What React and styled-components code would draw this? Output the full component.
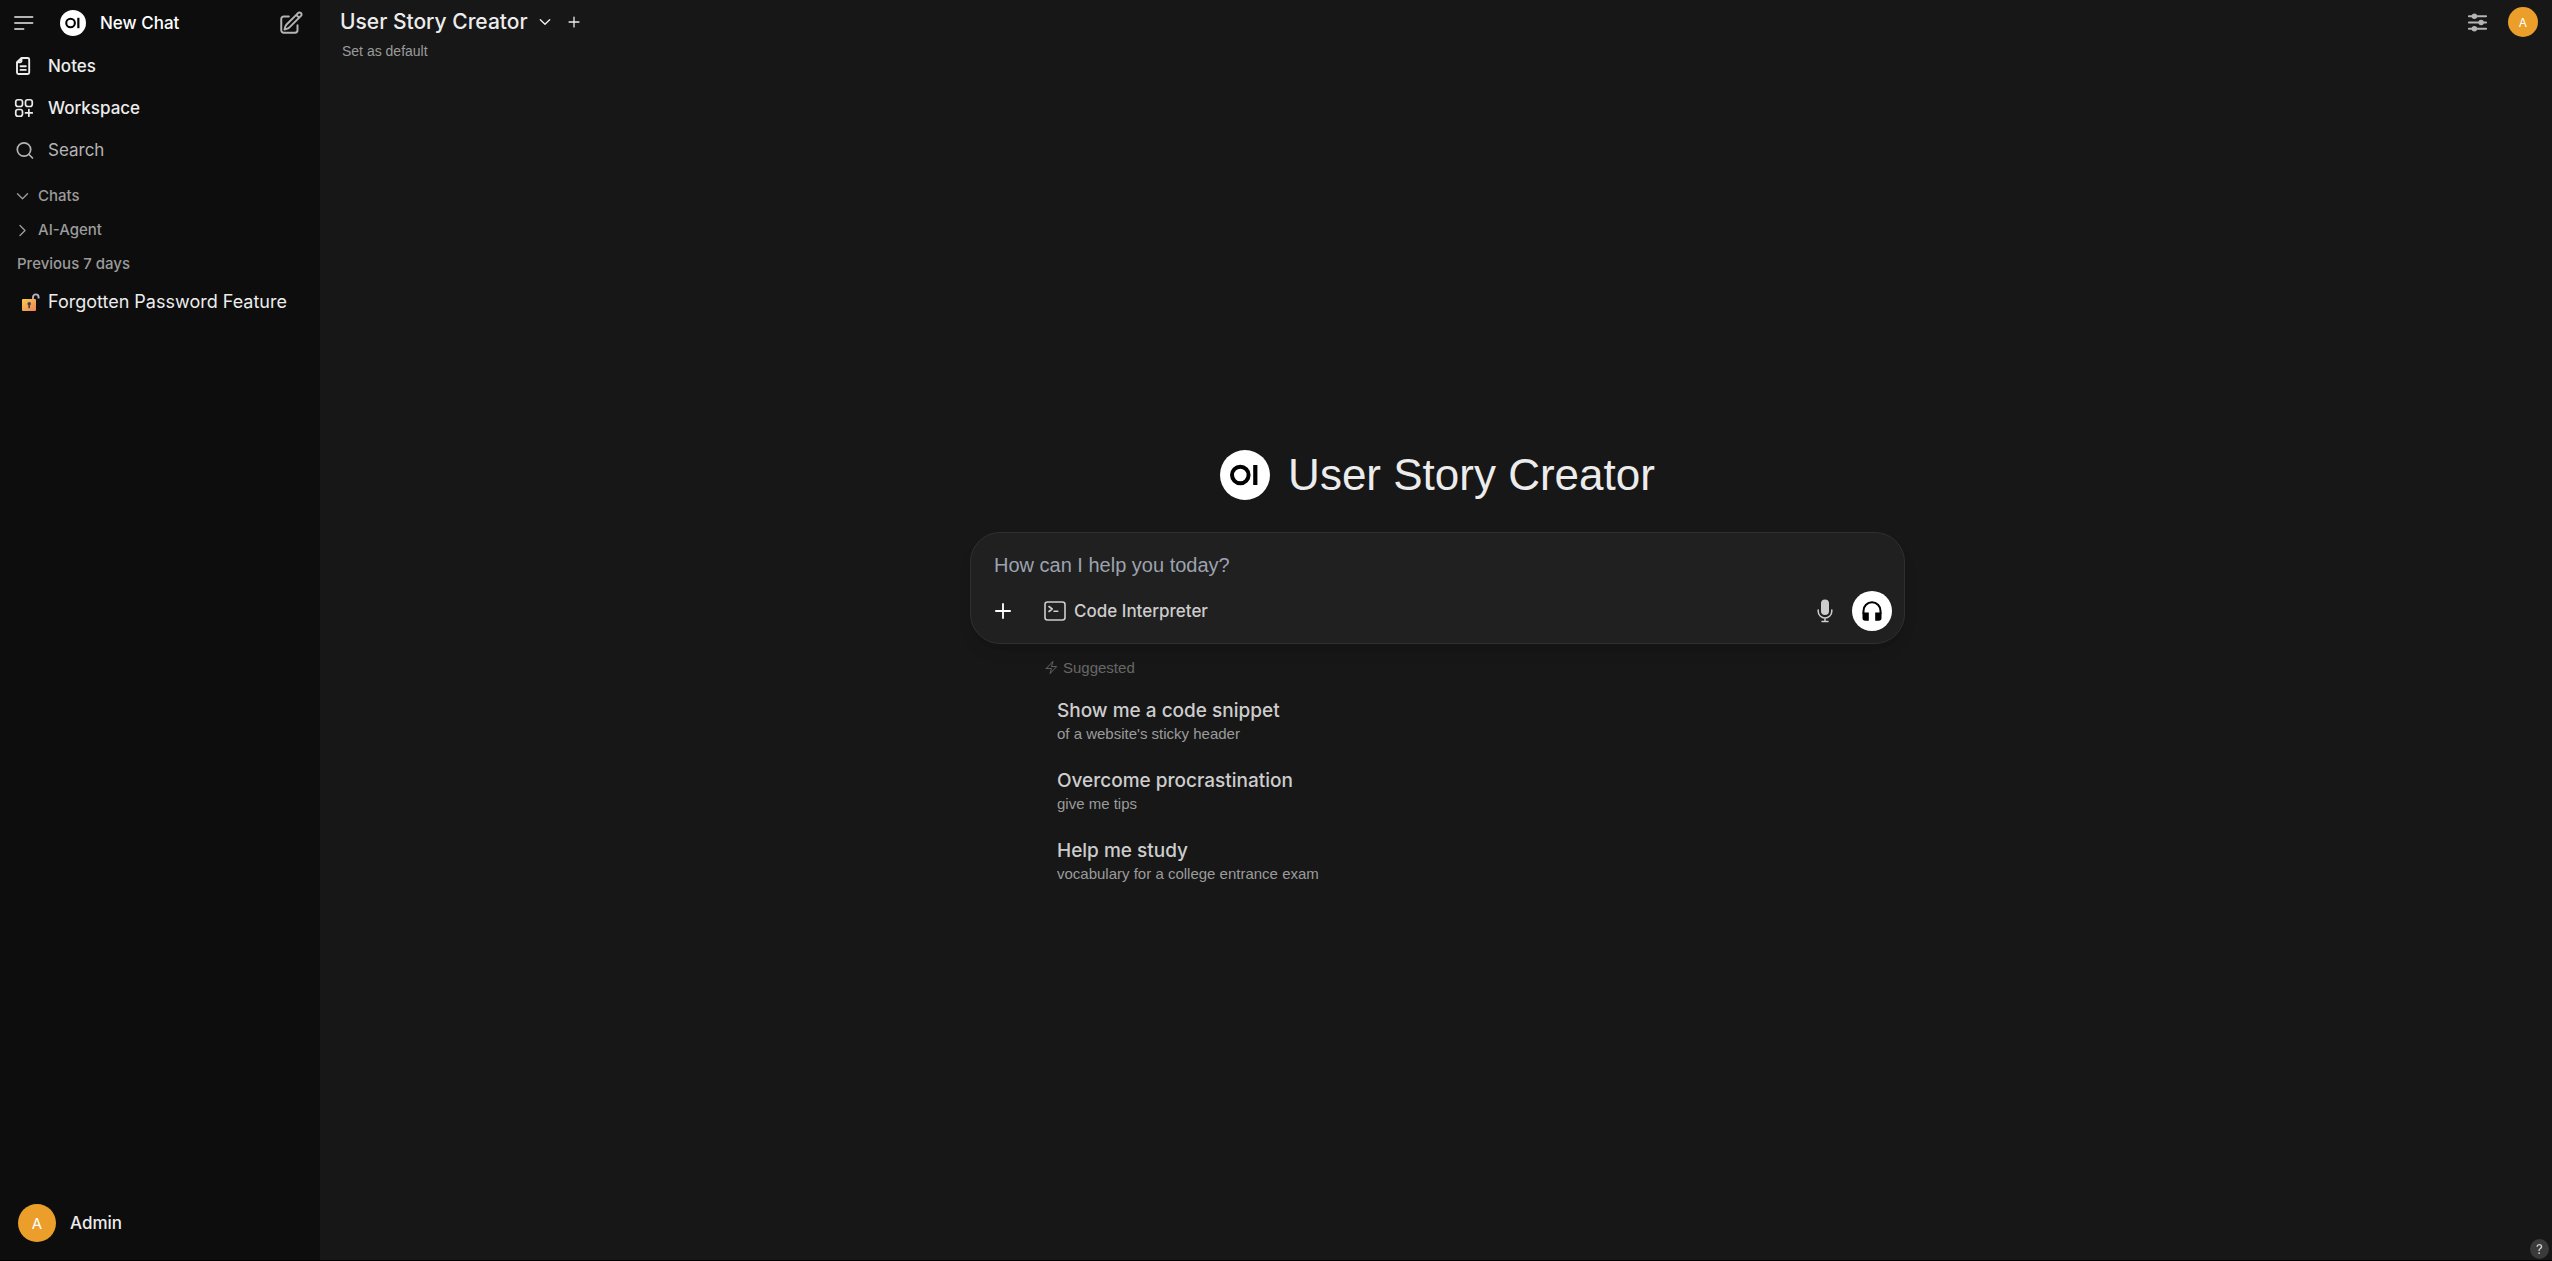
import React from "react";
import styled, { createGlobalStyle } from "styled-components";

const display = `"Liberation Sans", Arial, sans-serif`;
const ui = `Inter, "Liberation Sans", sans-serif`;

const GlobalStyle = createGlobalStyle`
  *, *::before, *::after { box-sizing: border-box; }
  body { margin: 0; background: #171717; color: #ececec; font-family: ${ui}; }
  button, textarea { font: inherit; color: inherit; background: none; border: 0; padding: 0; margin: 0; }
  button { cursor: pointer; text-align: left; }
  a { color: inherit; text-decoration: none; }
  h1, h2, p, ul { margin: 0; padding: 0; font-weight: inherit; }
  ul { list-style: none; }
`;

const Shell = styled.div`
  display: flex;
  height: 100vh;
  border-bottom: 1px solid #000;
`;

const Sidebar = styled.aside`
  flex: 0 0 320px;
  display: flex;
  flex-direction: column;
  background: #0d0d0d;
`;

const SidebarTop = styled.div`
  display: flex;
  align-items: center;
  height: 45px;
  padding: 0 16px 0 14px;
`;

const IconButton = styled.button`
  display: flex;
  align-items: center;
  justify-content: center;
  width: ${(p) => p.$size}px;
  height: ${(p) => p.$size}px;
  color: ${(p) => p.$color || "#b4b4b4"};
`;

const NewChat = styled.a`
  flex: 1;
  display: flex;
  align-items: center;
  gap: 14px;
  margin-left: 26px;
  font-size: 17px;
  font-weight: 500;
  line-height: 26px;
  color: #fff;
`;

const NavLink = styled.a`
  display: flex;
  align-items: center;
  gap: 12px;
  height: 42px;
  padding-left: 12px;
  font-size: 17px;
  font-weight: ${(p) => (p.$quiet ? 400 : 500)};
  line-height: 26px;
  color: ${(p) => (p.$quiet ? "#b4b4b4" : "#ececec")};
`;

const Sections = styled.div`
  display: flex;
  flex-direction: column;
  margin-top: 8px;
`;

const FolderButton = styled.button`
  display: flex;
  align-items: center;
  gap: 8px;
  height: 34px;
  padding-left: 15px;
  font-size: 15px;
  font-weight: 500;
  line-height: 22px;
  color: #9b9b9b;
`;

const Period = styled.h2`
  padding: 6px 17px;
  font-size: 15px;
  font-weight: 500;
  line-height: 22px;
  color: #9b9b9b;
`;

const ChatLink = styled.a`
  display: flex;
  align-items: center;
  gap: 8px;
  height: 42px;
  padding-left: 21px;
  font-size: 18px;
  line-height: 26px;
  color: #ececec;
`;

const Account = styled.button`
  display: flex;
  align-items: center;
  gap: 14px;
  margin-top: auto;
  padding: 18px;
  font-size: 17px;
  font-weight: 500;
`;

const Avatar = styled.span`
  display: flex;
  align-items: center;
  justify-content: center;
  width: ${(p) => p.$size}px;
  height: ${(p) => p.$size}px;
  border-radius: 50%;
  background: #eb9f2a;
  color: #fff;
  font-family: ${ui};
  font-size: ${(p) => p.$font}px;
  font-weight: 400;
`;

const Main = styled.main`
  flex: 1;
  min-width: 0;
  display: flex;
  flex-direction: column;
`;

const TopBar = styled.header`
  display: flex;
  justify-content: space-between;
  align-items: flex-start;
  padding: 7px 14px 0 20px;
`;

const ModelRow = styled.div`
  display: flex;
  align-items: center;
  gap: 10px;
  height: 30px;
`;

const ModelButton = styled.button`
  display: flex;
  align-items: center;
  gap: 10px;
  font-size: 21px;
  font-weight: 500;
  line-height: 30px;
`;

const DefaultButton = styled.button`
  display: block;
  margin-top: 4px;
  padding-left: 2px;
  font-family: ${display};
  font-size: 14px;
  line-height: 20px;
  color: #9b9b9b;
`;

const TopActions = styled.div`
  display: flex;
  align-items: center;
  gap: 18px;
`;

const Center = styled.section`
  flex: 1;
  display: flex;
  flex-direction: column;
  align-items: center;
  justify-content: center;
  padding: 21px 16px 0 19px;
`;

const Hero = styled.div`
  display: flex;
  align-items: center;
  gap: 18px;
  height: 58px;
`;

const HeroTitle = styled.h1`
  font-family: ${display};
  font-size: 44px;
  line-height: 58px;
`;

const Composer = styled.form`
  width: 100%;
  max-width: 935px;
  margin-top: 28px;
  padding: 18px 11px 12px;
  background: #202020;
  border: 1px solid #303030;
  border-radius: 30px;
  box-shadow: 0 10px 15px -3px rgba(0, 0, 0, 0.1), 0 4px 6px -4px rgba(0, 0, 0, 0.1);
`;

const Prompt = styled.textarea`
  display: block;
  width: 100%;
  height: 28px;
  padding: 0 12px;
  resize: none;
  outline: none;
  font-family: ${display};
  font-size: 20px;
  line-height: 28px;
  &::placeholder { color: #9ca3af; opacity: 1; }
`;

const Tools = styled.div`
  display: flex;
  align-items: center;
  height: 40px;
  margin-top: 12px;
  padding: 0 1px 0 5px;
`;

const CodeButton = styled.button`
  display: flex;
  align-items: center;
  gap: 8px;
  margin-left: 25px;
  font-size: 17px;
  font-weight: 500;
  color: #cdcdcd;
`;

const ToolsEnd = styled.div`
  display: flex;
  align-items: center;
  gap: 7px;
  margin-left: auto;
`;

const VoiceButton = styled.button`
  display: flex;
  align-items: center;
  justify-content: center;
  width: 40px;
  height: 40px;
  border-radius: 50%;
  background: #fff;
  color: #000;
`;

const Suggestions = styled.div`
  width: 100%;
  max-width: 787px;
  margin-top: 13px;
`;

const SuggestedLabel = styled.h2`
  display: flex;
  align-items: center;
  gap: 4px;
  font-family: ${display};
  font-size: 15px;
  line-height: 22px;
  color: #676767;
`;

const SuggestionList = styled.ul`
  margin-top: 8px;
`;

const Suggestion = styled.button`
  display: block;
  width: 100%;
  height: 70px;
  padding: 0 13px;
`;

const SuggestionTitle = styled.span`
  display: block;
  font-size: 19px;
  font-weight: 500;
  line-height: 24px;
  color: #cdcdcd;
`;

const SuggestionText = styled.span`
  display: block;
  font-family: ${display};
  font-size: 15px;
  line-height: 22px;
  color: #9b9b9b;
`;

const HelpButton = styled.button`
  position: fixed;
  right: 3px;
  bottom: 2px;
  display: flex;
  align-items: center;
  justify-content: center;
  width: 19px;
  height: 20px;
  border-radius: 50%;
  background: #3a3a3a;
  color: #cdcdcd;
  font-size: 13px;
  font-weight: 500;
`;

function Stroke({ size, width = 1.5, children }) {
  return (
    <svg width={size} height={size} viewBox="0 0 24 24" fill="none" stroke="currentColor"
      strokeWidth={width} strokeLinecap="round" strokeLinejoin="round" aria-hidden="true">
      {children}
    </svg>
  );
}

function Logo({ size }) {
  return (
    <svg width={size} height={size} viewBox="0 0 50 50" aria-hidden="true">
      <circle cx="25" cy="25" r="25" fill="#fff" />
      <circle cx="20.3" cy="25" r="8.3" fill="none" stroke="#000" strokeWidth="4" />
      <rect x="33.2" y="15" width="4.2" height="20" fill="#000" />
    </svg>
  );
}

function OpenLock() {
  return (
    <svg width="19" height="19" viewBox="0 0 19 19" aria-hidden="true">
      <defs>
        <linearGradient id="lockBody" x1="0" y1="0" x2="1" y2="1">
          <stop offset="0" stopColor="#fccb4b" />
          <stop offset="1" stopColor="#ee8357" />
        </linearGradient>
      </defs>
      <path d="M12 7V4.2a2.8 2.8 0 0 1 5.600 0V5.500" fill="none" stroke="#b9b0bd" strokeWidth="1.9" />
      <rect x="1" y="6" width="14" height="12" rx="1" fill="url(#lockBody)" />
      <circle cx="8.2" cy="10.800" r="1.8" fill="#4a3d55" />
      <rect x="7.400" y="11" width="1.600" height="4.2" fill="#4a3d55" />
    </svg>
  );
}

const suggestions = [
  ["Show me a code snippet", "of a website's sticky header"],
  ["Overcome procrastination", "give me tips"],
  ["Help me study", "vocabulary for a college entrance exam"],
];

export default function App() {
  return (
    <>
      <GlobalStyle />
      <Shell>
        <Sidebar>
          <SidebarTop>
            <IconButton $size={20} aria-label="Toggle sidebar">
              <svg width="20" height="14" viewBox="0 0 20 14" fill="none" stroke="currentColor" strokeWidth="1.9" strokeLinecap="round" aria-hidden="true">
                <path d="M1 1h17.5M1 7h17.5M1 13h8.5" />
              </svg>
            </IconButton>
            <NewChat href="#new"><Logo size={26} />New Chat</NewChat>
            <IconButton $size={27} aria-label="Start a new chat">
              <Stroke size={26} width={1.8}>
                <path d="m16.862 4.487 1.687-1.688a1.875 1.875 0 1 1 2.652 2.652L10.582 16.07a4.5 4.5 0 0 1-1.897 1.13L6 18l.8-2.685a4.5 4.5 0 0 1 1.13-1.897l8.932-8.931Zm0 0L19.5 7.125M18 14v4.75A2.25 2.25 0 0 1 15.75 21H5.25A2.25 2.25 0 0 1 3 18.75V8.25A2.25 2.25 0 0 1 5.25 6H10" />
              </Stroke>
            </IconButton>
          </SidebarTop>
          <nav>
            <NavLink href="#notes">
              <Stroke size={24} width={1.9}>
                <path d="M9.5 4H15.700a1.500 1.500 0 0 1 1.500 1.500v13a1.500 1.500 0 0 1-1.500 1.500H6.500a1.500 1.500 0 0 1-1.500-1.500V8.300ZM9.500 4v3a1.300 1.300 0 0 1-1.300 1.300H5M8.500 12.300h5.300M8.500 15.900h5.300" />
              </Stroke>
              Notes
            </NavLink>
            <NavLink href="#workspace">
              <Stroke size={24} width={1.7}>
                <path d="M13.5 16.875h3.375m0 0h3.375m-3.375 0V13.5m0 3.375v3.375M6 10.5h2.25a2.25 2.25 0 0 0 2.25-2.25V6a2.25 2.25 0 0 0-2.25-2.25H6A2.25 2.25 0 0 0 3.75 6v2.25A2.25 2.25 0 0 0 6 10.5Zm0 9.75h2.25A2.25 2.25 0 0 0 10.5 18v-2.25a2.25 2.25 0 0 0-2.25-2.25H6a2.25 2.25 0 0 0-2.25 2.25V18A2.25 2.25 0 0 0 6 20.25Zm9.75-9.75H18a2.25 2.25 0 0 0 2.250-2.250V6A2.250 2.250 0 0 0 18 3.750h-2.250A2.250 2.250 0 0 0 13.500 6v2.250a2.250 2.250 0 0 0 2.250 2.250Z" />
              </Stroke>
              Workspace
            </NavLink>
            <NavLink href="#search" $quiet>
              <Stroke size={24} width={1.7}>
                <circle cx="12" cy="11.500" r="6.700" />
                <path d="m17 16.500 3.500 3.500" />
              </Stroke>
              Search
            </NavLink>
          </nav>
          <Sections>
            <FolderButton aria-expanded="true">
              <Stroke size={15} width={2.2}><path d="m4 7.500 8 8 8-8" /></Stroke>
              Chats
            </FolderButton>
            <FolderButton aria-expanded="false">
              <Stroke size={15} width={2.2}><path d="m8 4 8 8-8 8" /></Stroke>
              AI-Agent
            </FolderButton>
            <Period>Previous 7 days</Period>
            <ChatLink href="#chat"><OpenLock />Forgotten Password Feature</ChatLink>
          </Sections>
          <Account>
            <Avatar $size={38} $font={15}>A</Avatar>
            Admin
          </Account>
        </Sidebar>
        <Main>
          <TopBar>
            <div>
              <ModelRow>
                <ModelButton aria-haspopup="listbox">
                  User Story Creator
                  <Stroke size={14} width={2.4}><path d="m4 8 8 8 8-8" /></Stroke>
                </ModelButton>
                <IconButton $size={24} $color="#ececec" aria-label="Add model">
                  <Stroke size={14} width={2.2}><path d="M12 3.500v17M3.500 12h17" /></Stroke>
                </IconButton>
              </ModelRow>
              <DefaultButton>Set as default</DefaultButton>
            </div>
            <TopActions>
              <IconButton $size={25} aria-label="Controls">
                <Stroke size={25} width={1.9}>
                  <path d="M10.5 6h9.750M3.750 6H7.500m3 12h9.750m-16.500 0H7.500m9-6h3.750m-16.500 0h9.750" />
                  <g fill="currentColor">
                    <circle cx="9" cy="6" r="1.700" />
                    <circle cx="15.500" cy="12" r="1.700" />
                    <circle cx="9" cy="18" r="1.700" />
                  </g>
                </Stroke>
              </IconButton>
              <IconButton $size={30} aria-label="User menu">
                <Avatar $size={30} $font={12}>A</Avatar>
              </IconButton>
            </TopActions>
          </TopBar>
          <Center>
            <Hero>
              <Logo size={50} />
              <HeroTitle>User Story Creator</HeroTitle>
            </Hero>
            <Composer onSubmit={(e) => e.preventDefault()}>
              <Prompt rows={1} aria-label="Message" placeholder="How can I help you today?" />
              <Tools>
                <IconButton type="button" $size={32} $color="#fff" aria-label="More">
                  <Stroke size={20} width={2.200}><path d="M12 3.500v17M3.500 12h17" /></Stroke>
                </IconButton>
                <CodeButton type="button">
                  <svg width="22" height="20" viewBox="0 0 22 20" fill="none" stroke="currentColor" strokeWidth="1.600" strokeLinecap="round" strokeLinejoin="round" aria-hidden="true">
                    <rect x="1" y="1" width="20" height="18" rx="2.500" />
                    <path d="m5 5.500 3.200 2.500L5 10.500M10 10.200h3.800" />
                  </svg>
                  Code Interpreter
                </CodeButton>
                <ToolsEnd>
                  <IconButton type="button" $size={40} $color="#cdcdcd" aria-label="Dictate">
                    <svg width="16" height="24" viewBox="0 0 16 24" aria-hidden="true">
                      <rect x="4" y="0.500" width="8" height="15.500" rx="4" fill="currentColor" />
                      <path d="M1.200 11v1.200a6.800 6.800 0 0 0 13.600 0V11M8 19v3.500M5 22.600h6" fill="none" stroke="currentColor" strokeWidth="1.500" strokeLinecap="round" />
                    </svg>
                  </IconButton>
                  <VoiceButton type="button" aria-label="Voice mode">
                    <svg width="20" height="20" viewBox="0 0 20 20" aria-hidden="true">
                      <path d="M1.500 13V9.800a8.500 8.500 0 0 1 17 0V13" fill="none" stroke="currentColor" strokeWidth="2" />
                      <path d="M0.500 11.500h6.300v8.200H3.200a2.700 2.700 0 0 1-2.700-2.700ZM13.200 11.500h6.300V17a2.700 2.700 0 0 1-2.700 2.700h-3.600Z" fill="currentColor" />
                    </svg>
                  </VoiceButton>
                </ToolsEnd>
              </Tools>
            </Composer>
            <Suggestions>
              <SuggestedLabel>
                <Stroke size={15} width={1.500}><path d="m3.750 13.500 10.500-11.250L12 10.500h8.250L9.750 21.750 12 13.500H3.750Z" /></Stroke>
                Suggested
              </SuggestedLabel>
              <SuggestionList>
                {suggestions.map(([title, text]) => (
                  <li key={title}>
                    <Suggestion>
                      <SuggestionTitle>{title}</SuggestionTitle>
                      <SuggestionText>{text}</SuggestionText>
                    </Suggestion>
                  </li>
                ))}
              </SuggestionList>
            </Suggestions>
          </Center>
        </Main>
      </Shell>
      <HelpButton aria-label="Help">?</HelpButton>
    </>
  );
}
